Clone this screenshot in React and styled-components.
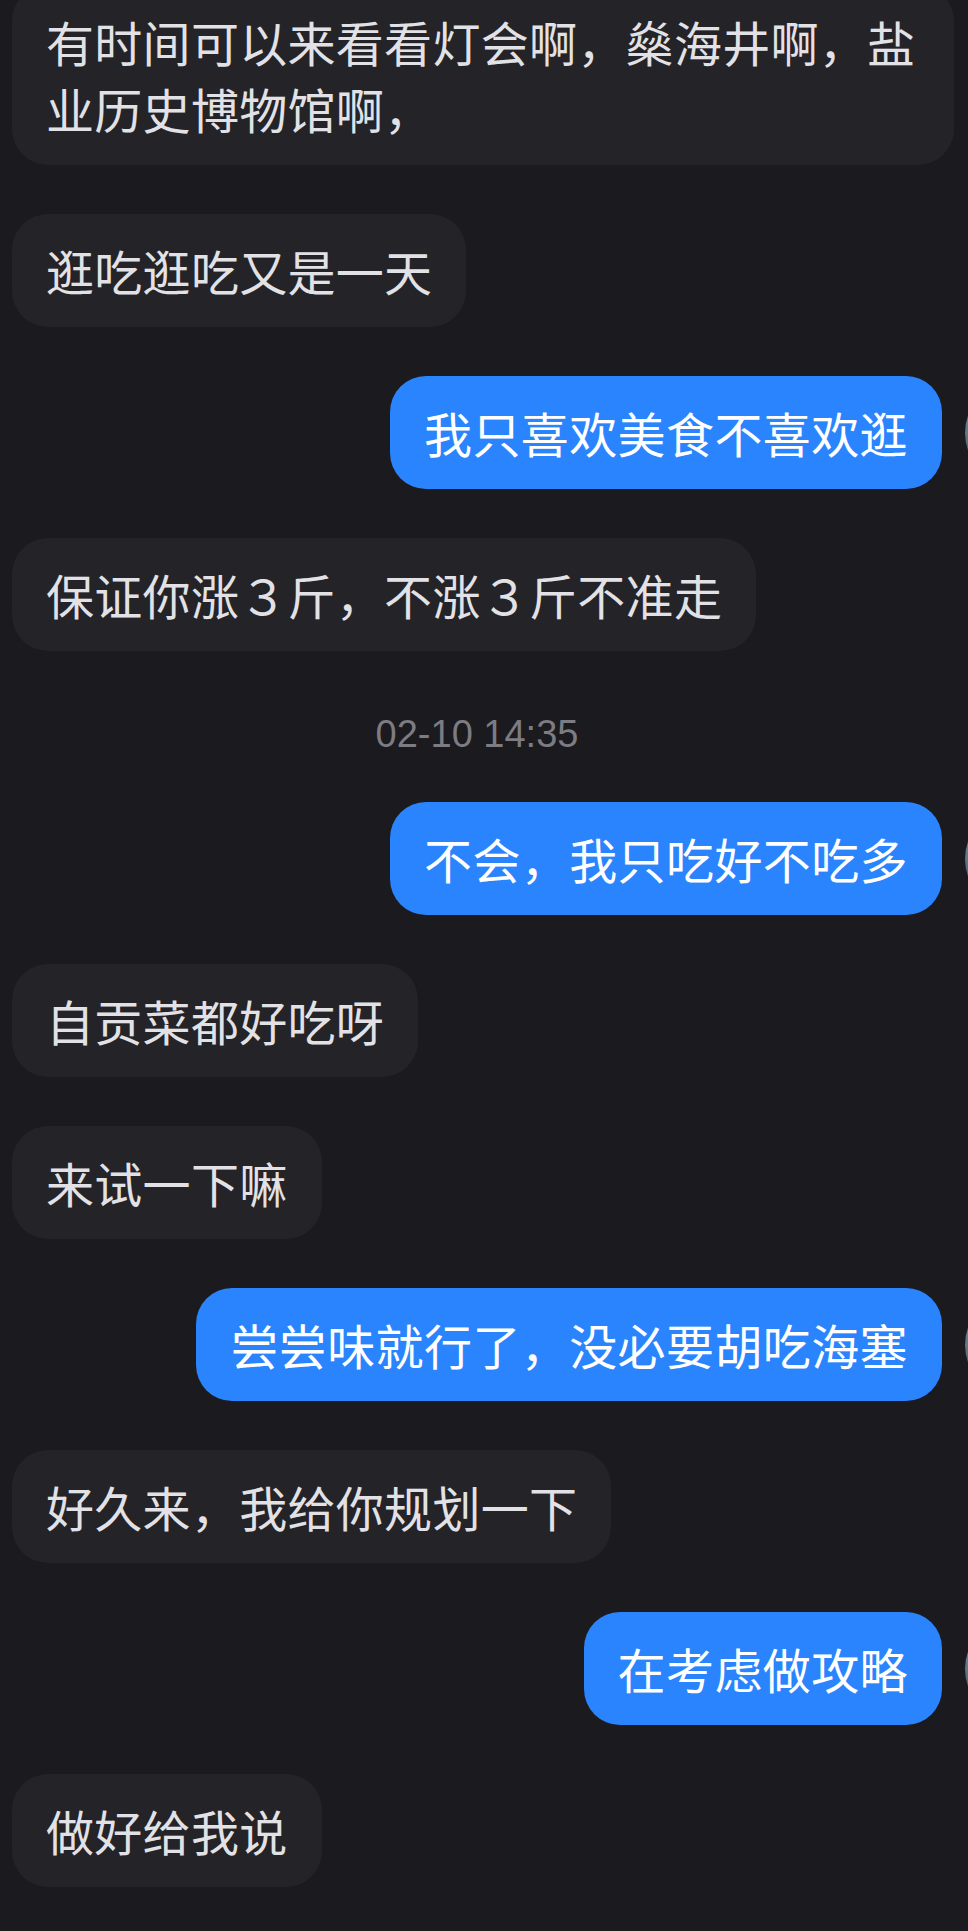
import React from "react";
import styled, { createGlobalStyle } from "styled-components";

const GlobalStyle = createGlobalStyle`
    html, body {
        margin: 0;
        padding: 0;
        background: #1b1a1f;
        overflow: hidden;
    }
    * { box-sizing: border-box; }
`;

const Screen = styled.div`
    width: 968px;
    height: 1931px;
    overflow: hidden;
    background: #1b1a1f;
    font-family: "Noto Sans CJK SC", "Noto Sans", sans-serif;
`;

const Thread = styled.div`
    display: flex;
    flex-direction: column;
    gap: 49px;
    margin-top: -15px;
    padding: 0 0 0 12px;
`;

const Row = styled.div`
    display: flex;
    align-items: center;
    justify-content: ${props => (props.$mine ? "flex-end" : "flex-start")};
    margin-right: ${props => (props.$mine ? "-101px" : "14px")};
`;

const Bubble = styled.div`
    max-width: 942px;
    padding: 23px 34px;
    border-radius: 36px;
    font-size: 48px;
    line-height: 67px;
    letter-spacing: ${props => (props.$mine ? "0.4px" : "0.3px")};
    background: ${props => (props.$mine ? "#2a84fe" : "#242328")};
    color: ${props => (props.$mine ? "#ffffff" : "#e2e2e6")};
`;

const Avatar = styled.div`
    flex: none;
    width: 104px;
    height: 104px;
    margin-left: 23px;
    border-radius: 50%;
    background: radial-gradient(circle at 30% 40%, #c9d4dc 0%, #6f8797 25%, #2c3b47 60%, #1d262e 100%);
`;

const Stamp = styled.div`
    padding-top: 16px;
    margin-right: 26px;
    text-align: center;
    font-family: "Liberation Sans", Arial, sans-serif;
    font-size: 38px;
    line-height: 37px;
    color: #7d7c83;
`;

const messages = [
    { text: "有时间可以来看看灯会啊，燊海井啊，盐业历史博物馆啊，" },
    { text: "逛吃逛吃又是一天" },
    { text: "我只喜欢美食不喜欢逛", mine: true },
    { text: "保证你涨３斤，不涨３斤不准走" },
    { stamp: "02-10 14:35" },
    { text: "不会，我只吃好不吃多", mine: true },
    { text: "自贡菜都好吃呀" },
    { text: "来试一下嘛" },
    { text: "尝尝味就行了，没必要胡吃海塞", mine: true },
    { text: "好久来，我给你规划一下" },
    { text: "在考虑做攻略", mine: true },
    { text: "做好给我说" },
];

const App = () => {
    return (
        <Screen>
            <GlobalStyle />
            <Thread>
                {messages.map((m, i) =>
                    m.stamp ? (
                        <Stamp key={i}>{m.stamp}</Stamp>
                    ) : (
                        <Row key={i} $mine={m.mine}>
                            <Bubble $mine={m.mine}>{m.text}</Bubble>
                            {m.mine && <Avatar />}
                        </Row>
                    )
                )}
            </Thread>
        </Screen>
    );
};

export default App;
